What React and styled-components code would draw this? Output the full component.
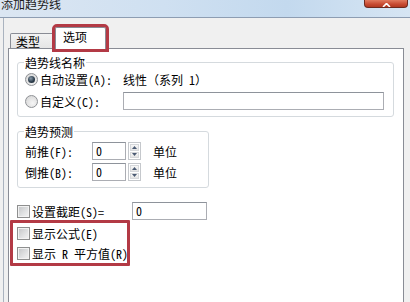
import React from "react";
import styled, { createGlobalStyle } from "styled-components";

const GlobalStyle = createGlobalStyle`
  html, body {
    margin: 0;
    padding: 0;
    background: #f0f0f0;
    overflow: hidden;
  }
  body {
    font-family: "Noto Sans Mono CJK SC", "Noto Sans CJK SC", sans-serif;
    font-size: 12px;
    color: #000;
  }
`;

const Window = styled.div`
  width: 410px;
  height: 302px;
  overflow: hidden;
  display: flex;
  flex-direction: column;
  background: #f0f0f0;
`;

const TitleBar = styled.div`
  height: 17px;
  flex: none;
  display: flex;
  justify-content: space-between;
  align-items: flex-start;
  overflow: hidden;
  background: linear-gradient(to right, #dbe6f2 0%, #cfe0f1 40%, #c3d9ee 70%, #d6e5f3 100%);
  border-bottom: 1px solid #8d9db2;
`;

const Title = styled.span`
  margin-top: -3px;
  padding-left: 1px;
  line-height: 14px;
  color: #1b1b1b;
`;

const CloseButton = styled.div`
  width: 44px;
  height: 8px;
  margin-right: 2px;
  box-sizing: border-box;
  display: flex;
  justify-content: center;
  align-items: flex-end;
  border: 1px solid #6e2a1e;
  border-top: none;
  border-radius: 0 0 4px 4px;
  background: linear-gradient(to bottom, #e07a5f, #c74a31 60%, #b13a22);
`;

const Client = styled.div`
  flex: 1;
  display: flex;
  flex-direction: column;
  margin-left: 3px;
  padding: 0 6px 0 4px;
  border-left: 1px solid #aab3bf;
  min-height: 0;
`;

const TabStrip = styled.div`
  display: flex;
  align-items: flex-end;
  padding: 9px 0 0 2px;
`;

const Tab = styled.div`
  position: relative;
  box-sizing: border-box;
  border: 1px solid #898c95;
  border-bottom: none;
  border-radius: 2px 2px 0 0;
  height: ${(p) => (p.$active ? 22 : 15)}px;
  width: ${(p) => (p.$active ? 51 : 46)}px;
  margin-bottom: ${(p) => (p.$active ? -1 : 0)}px;
  margin-left: ${(p) => (p.$active ? -1 : 0)}px;
  padding: ${(p) => (p.$active ? "2px 0 0 7px" : "1px 0 0 5px")};
  line-height: 14px;
  background: ${(p) =>
    p.$active ? "#fff" : "linear-gradient(to bottom, #f3f3f3, #e5e5e5)"};
  z-index: ${(p) => (p.$active ? 2 : 1)};
  outline: ${(p) => (p.$mark ? "3px solid #b33a45" : "none")};
  outline-offset: 0;
`;

const Panel = styled.div`
  flex: 1;
  display: flex;
  flex-direction: column;
  align-items: flex-start;
  background: #fff;
  border: 1px solid #898c95;
  border-bottom: none;
  padding: 0;
`;

const GroupBox = styled.fieldset`
  box-sizing: border-box;
  width: ${(p) => p.$width}px;
  margin: ${(p) => p.$top}px 0 0 8px;
  padding: 0 6px 5px 6px;
  min-width: 0;
  border: 1px solid #d5dade;
  border-radius: 3px;
  display: flex;
  flex-direction: column;
`;

const Legend = styled.legend`
  padding: 0 1px;
  line-height: 13px;
`;

const Row = styled.div`
  display: flex;
  align-items: center;
  height: 20px;
  margin-top: ${(p) => p.$top || 0}px;
  white-space: nowrap;
`;

const Caption = styled.label`
  display: flex;
  align-items: center;
  flex: none;
  width: ${(p) => p.$width}px;
  padding-left: ${(p) => p.$indent || 0}px;
  box-sizing: border-box;
  white-space: pre;
`;

const Radio = styled.span`
  position: relative;
  flex: none;
  box-sizing: border-box;
  width: 13px;
  height: 13px;
  margin-right: 2px;
  border-radius: 50%;
  border: 1px solid #8f9296;
  background: radial-gradient(circle at 60% 65%, #f6f6f6 0%, #dcdcdc 70%, #c9c9c9 100%);
  &::after {
    content: "";
    display: ${(p) => (p.$checked ? "block" : "none")};
    position: absolute;
    left: 2px;
    top: 2px;
    width: 7px;
    height: 7px;
    border-radius: 50%;
    background: radial-gradient(circle at 40% 35%, #8a9aa8 0%, #2e3f4e 55%, #141c24 100%);
  }
`;

const CheckBox = styled.span`
  flex: none;
  box-sizing: border-box;
  width: 13px;
  height: 13px;
  margin-right: 2px;
  border: 1px solid #8e8f8f;
  box-shadow: inset 0 0 0 1px #f2f2f2;
  background: linear-gradient(135deg, #c2c4c6 0%, #e2e3e4 60%, #f4f4f4 100%);
`;

const Field = styled.div`
  flex: none;
  box-sizing: border-box;
  width: ${(p) => p.$width}px;
  height: 18px;
  padding-left: 3px;
  line-height: 16px;
  border: 1px solid #abadb3;
  border-top-color: #8e939b;
  background: #fff;
`;

const Spin = styled.div`
  flex: none;
  display: flex;
  flex-direction: column;
  width: 13px;
  height: 18px;
  margin-left: 2px;
  box-sizing: border-box;
  border: 1px solid #c5c8cc;
  gap: 1px;
  padding: 1px;
`;

const SpinButton = styled.div`
  flex: 1;
  display: flex;
  align-items: center;
  justify-content: center;
  border: 1px solid #d6d8db;
  background: linear-gradient(to bottom, #f7f7f7, #e4e4e4);
`;

const Unit = styled.span`
  margin-left: 12px;
`;

const Value = styled.span`
  white-space: pre;
`;

const CheckRow = styled.div`
  display: flex;
  align-items: center;
  height: 20px;
  white-space: pre;
  margin-top: ${(p) => p.$top || 0}px;
  padding-left: ${(p) => p.$indent || 0}px;
`;

const Highlight = styled.div`
  box-sizing: border-box;
  width: 120px;
  margin: -1px 0 0 1px;
  padding: 0 0 0 4px;
  border: 3px solid #b33a45;
  border-radius: 1px;
`;

const Arrow = ({ up }) => (
  <svg width="5" height="3" viewBox="0 0 5 3">
    <path d={up ? "M0 3 L2.5 0 L5 3 Z" : "M0 0 L2.5 3 L5 0 Z"} fill="#4a5a73" />
  </svg>
);

const Spinner = () => (
  <Spin>
    <SpinButton>
      <Arrow up />
    </SpinButton>
    <SpinButton>
      <Arrow />
    </SpinButton>
  </Spin>
);

const App = () => (
  <Window>
    <GlobalStyle />
    <TitleBar>
      <Title>添加趋势线</Title>
      <CloseButton>
        <svg width="9" height="4" viewBox="0 3 9 4">
          <path d="M1 0 L8 7 M8 0 L1 7" stroke="#fff" strokeWidth="1.6" />
        </svg>
      </CloseButton>
    </TitleBar>
    <Client>
      <TabStrip>
        <Tab>类型</Tab>
        <Tab $active $mark>选项</Tab>
      </TabStrip>
      <Panel>
        <GroupBox $width={377} $top={7}>
          <Legend>趋势线名称</Legend>
          <Row>
            <Caption $width={99} $indent={1}>
              <Radio $checked />
              自动设置(A):
            </Caption>
            <Value>线性（系列 1）</Value>
          </Row>
          <Row $top={2}>
            <Caption $width={99} $indent={1}>
              <Radio />
              自定义(C):
            </Caption>
            <Field $width={261} />
          </Row>
        </GroupBox>
        <GroupBox $width={192} $top={8}>
          <Legend>趋势预测</Legend>
          <Row $top={3}>
            <Caption $width={68} $indent={1}>前推(F):</Caption>
            <Field $width={34}>0</Field>
            <Spinner />
            <Unit>单位</Unit>
          </Row>
          <Row $top={1}>
            <Caption $width={68} $indent={1}>倒推(B):</Caption>
            <Field $width={34}>0</Field>
            <Spinner />
            <Unit>单位</Unit>
          </Row>
        </GroupBox>
        <CheckRow $top={13} $indent={8}>
          <Caption $width={115}>
            <CheckBox />
            设置截距(S)=
          </Caption>
          <Field $width={75}>0</Field>
        </CheckRow>
        <Highlight>
          <CheckRow>
            <CheckBox />
            显示公式(E)
          </CheckRow>
          <CheckRow>
            <CheckBox />
            显示 R 平方值(R)
          </CheckRow>
        </Highlight>
      </Panel>
    </Client>
  </Window>
);

export default App;
